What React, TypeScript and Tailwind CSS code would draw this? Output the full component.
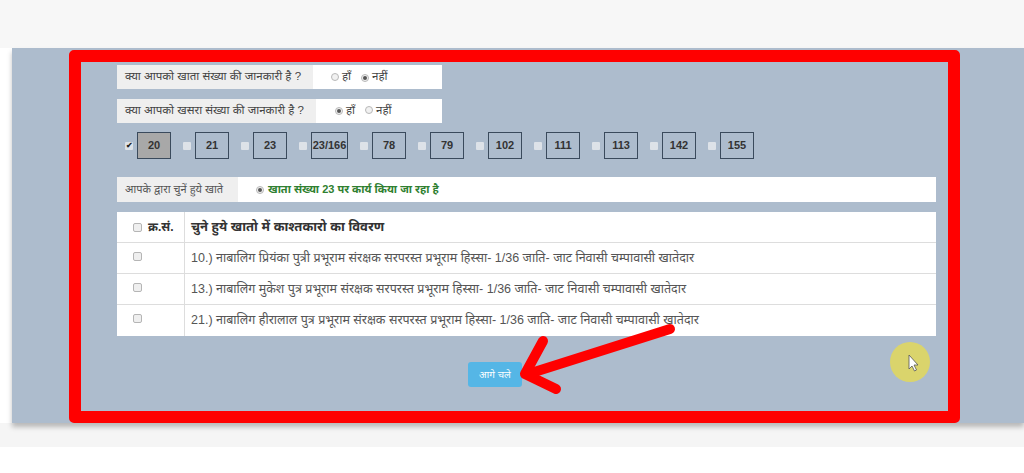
import React from "react";

const FONT = { fontFamily: '"Liberation Sans", "Noto Sans Devanagari", "Noto Sans", sans-serif' };

function Radio({ checked }: { checked?: boolean }) {
  return (
    <span className="inline-flex items-center justify-center w-[8px] h-[8px] rounded-full border border-[#b8b8b8] bg-[#f1f1f1]">
      {checked && <span className="w-[4px] h-[4px] rounded-full bg-[#555]" />}
    </span>
  );
}

function Check({ checked }: { checked?: boolean }) {
  return (
    <span className="inline-flex items-center justify-center w-[8px] h-[8px] rounded-[1px] bg-[#dde2e8]">
      {checked && <span className="text-[8px] leading-none text-[#222] font-bold">✔</span>}
    </span>
  );
}

function TableCheck() {
  return <span className="inline-block w-[9px] h-[9px] rounded-[2px] border border-[#b5b5b5] bg-[#efefef]" />;
}

const nums = ["20", "21", "23", "23/166", "78", "79", "102", "111", "113", "142", "155"];

const rows = [
  "10.) नाबालिग प्रियंका पुत्री प्रभूराम संरक्षक सरपरस्त प्रभूराम हिस्सा- 1/36 जाति- जाट निवासी चम्पावासी खातेदार",
  "13.) नाबालिग मुकेश पुत्र प्रभूराम संरक्षक सरपरस्त प्रभूराम हिस्सा- 1/36 जाति- जाट निवासी चम्पावासी खातेदार",
  "21.) नाबालिग हीरालाल पुत्र प्रभूराम संरक्षक सरपरस्त प्रभूराम हिस्सा- 1/36 जाति- जाट निवासी चम्पावासी खातेदार",
];

export default function App() {
  return (
    <div className="relative w-[1024px] h-[473px] bg-white overflow-hidden" style={FONT}>
      <div className="h-[48px] bg-[#f7f7f7]" />
      <div className="ml-[12px] h-[375px] bg-[#adbccd] shadow-[0_4px_5px_rgba(0,0,0,0.25)] relative z-10">
        <div className="ml-[57px] mt-[2px] w-[891px] h-[373px] border-[12px] border-[#ff0000] rounded-[5px] inline-block align-top">
          <div className="pl-[36px] pt-[3px] pr-[12px]">
            {/* Row 1 */}
            <div className="flex w-[325px] h-[24px] text-[11.5px] text-[#444]">
              <div className="w-[196px] bg-[#efefef] flex items-center pl-[8px] whitespace-nowrap">क्या आपको खाता संख्या की जानकारी है ?</div>
              <div className="flex-1 bg-white flex items-center pl-[18px]">
                <Radio /><span className="ml-[3px]">हाँ</span>
                <span className="ml-[10px]"><Radio checked /></span><span className="ml-[3px]">नहीं</span>
              </div>
            </div>
            {/* Row 2 */}
            <div className="flex w-[325px] h-[24px] mt-[10px] text-[11.5px] text-[#444]">
              <div className="w-[199px] bg-[#efefef] flex items-center pl-[8px] whitespace-nowrap">क्या आपको खसरा संख्या की जानकारी है ?</div>
              <div className="flex-1 bg-white flex items-center pl-[19px]">
                <Radio checked /><span className="ml-[3px]">हाँ</span>
                <span className="ml-[10px]"><Radio /></span><span className="ml-[3px]">नहीं</span>
              </div>
            </div>
            {/* Numbers */}
            <div className="flex items-center mt-[9px] pl-[8px] gap-[12px]">
              {nums.map((n, i) => (
                <div key={n} className="flex items-center gap-[4px]">
                  <Check checked={i === 0} />
                  <div
                    className={`h-[27px] ${n === "23/166" ? "w-[37px]" : "w-[34px]"} border-[1.5px] border-[#3a4a5c] flex items-center justify-center text-[11px] font-bold text-[#333] ${i === 0 ? "bg-[#a8a8a8]" : ""}`}
                  >
                    {n}
                  </div>
                </div>
              ))}
            </div>
            {/* Selected */}
            <div className="flex w-[819px] h-[25px] mt-[18px] text-[11px]">
              <div className="w-[121px] bg-[#efefef] text-[#555] flex items-center pl-[8px]">आपके द्वारा चुनें हुये खाते</div>
              <div className="flex-1 bg-white flex items-center pl-[18px]">
                <Radio checked />
                <span className="ml-[4px] font-bold text-[#2f8030]">खाता संख्या 23 पर कार्य किया जा रहा है</span>
              </div>
            </div>
            {/* Table */}
            <div className="w-[819px] mt-[10px] bg-white">
              <div className="flex h-[31px] border-b border-[#dddddd]">
                <div className="w-[68px] border-r border-[#dddddd] flex items-center pl-[16px] gap-[6px]">
                  <TableCheck />
                  <span className="text-[12px] font-bold text-[#333]">क्र.सं.</span>
                </div>
                <div className="flex-1 flex items-center pl-[6px] text-[13px] font-bold text-[#333]">
                  चुने हुये खातो में काश्तकारो का विवरण
                </div>
              </div>
              {rows.map((r, i) => (
                <div key={i} className={`flex h-[31px] ${i < 2 ? "border-b border-[#dddddd]" : ""}`}>
                  <div className="w-[68px] border-r border-[#dddddd] flex items-start pt-[9px] pl-[16px]">
                    <TableCheck />
                  </div>
                  <div className="flex-1 flex items-center pl-[6px] text-[12.5px] text-[#555] whitespace-nowrap">{r}</div>
                </div>
              ))}
            </div>
            {/* Button */}
            <div className="mt-[26px] ml-[351px]">
              <button className="w-[54px] h-[25px] rounded-[3px] bg-[#55b6e6] text-white text-[10px] flex items-center justify-center">
                आगे चले
              </button>
            </div>
          </div>
        </div>
      </div>
      <div className="h-[24px] bg-[#f5f5f5]" />

      {/* overlay: arrow, highlight, cursor */}
      <svg className="absolute inset-0 pointer-events-none z-20" width="1024" height="473" viewBox="0 0 1024 473">
        <line x1="670" y1="329" x2="528" y2="374" stroke="#ff0000" strokeWidth="10" strokeLinecap="round" />
        <polyline points="543,341 525,374 556,389" fill="none" stroke="#ff0000" strokeWidth="10" strokeLinecap="round" strokeLinejoin="round" />
        <circle cx="910" cy="362" r="20" fill="#e2d85a" fillOpacity="0.85" />
        <path d="M909 355 L909 369 L912 366 L914.5 371 L916.5 370 L914 365 L918 365 Z" fill="#ffffff" stroke="#555" strokeWidth="0.8" strokeLinejoin="round" />
      </svg>
    </div>
  );
}
